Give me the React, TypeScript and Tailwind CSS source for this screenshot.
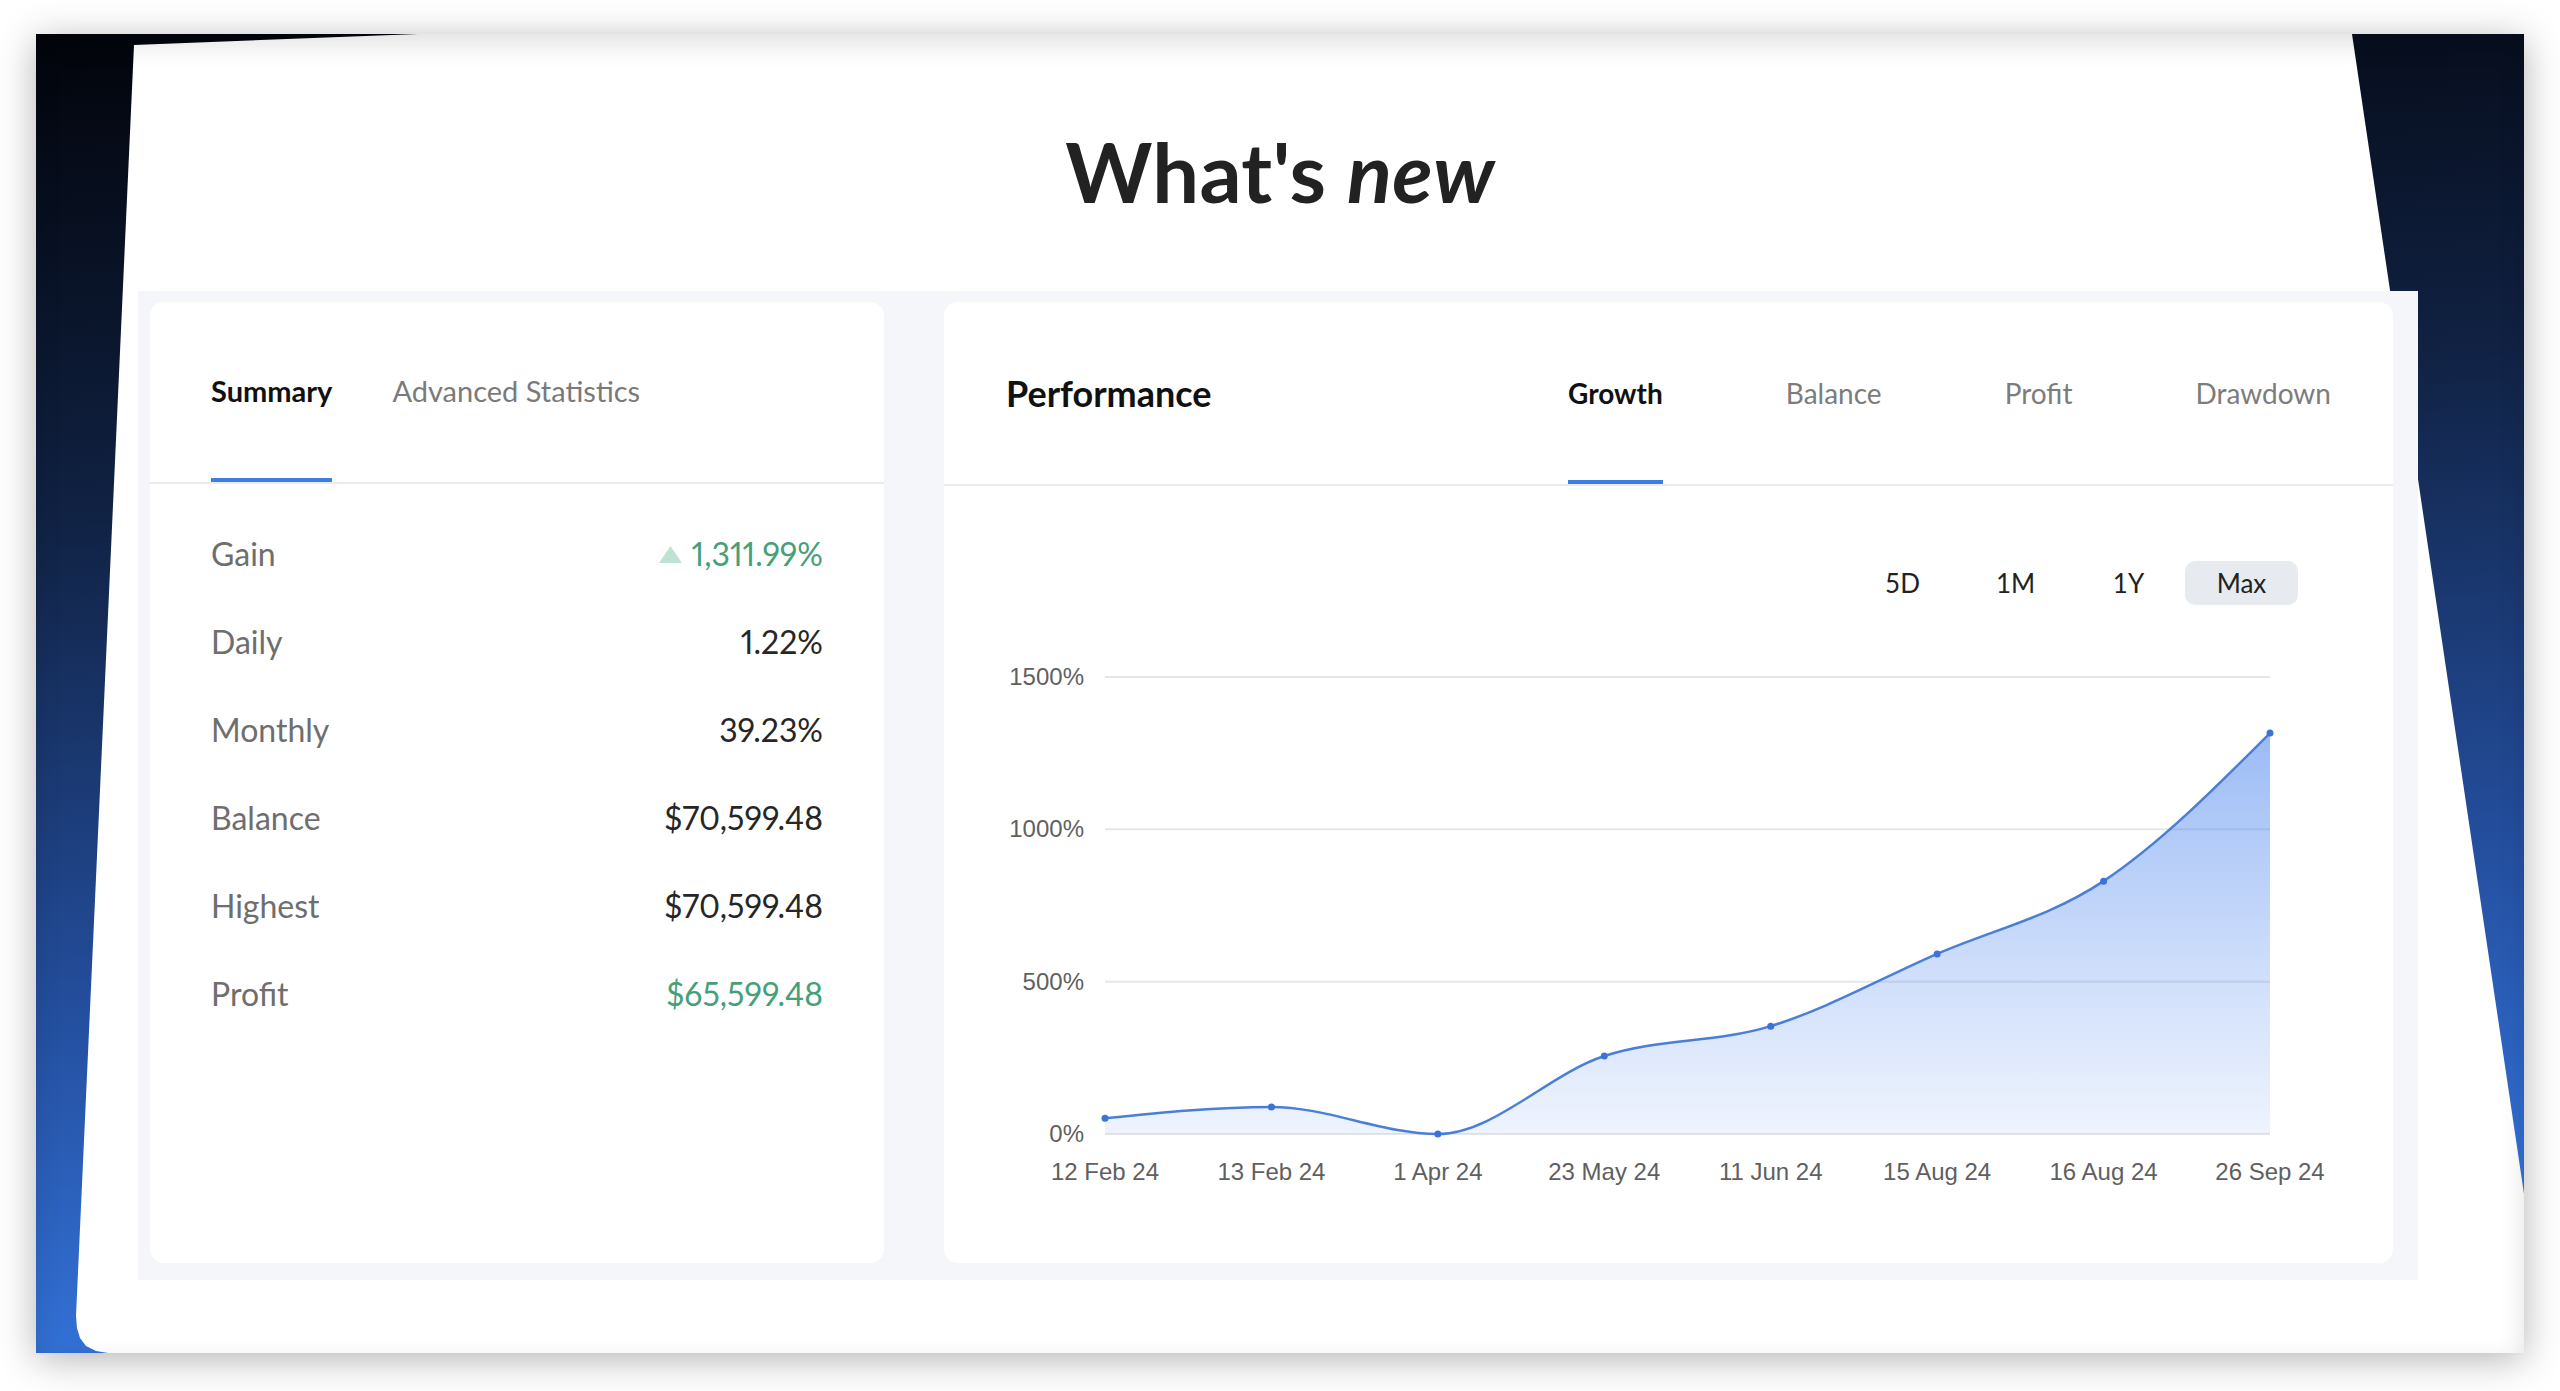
import React from "react";

const dates = ["12 Feb 24", "13 Feb 24", "1 Apr 24", "23 May 24", "11 Jun 24", "15 Aug 24", "16 Aug 24", "26 Sep 24"];
const growth = [52, 89, 0, 256, 354, 591, 830, 1316];

const X0 = 161;
const STEP = 166.43;
const BASE = 529;
const SCALE = 457 / 1500;

const px = (i: number) => X0 + i * STEP;
const py = (v: number) => BASE - v * SCALE;

// monotone cubic (same idea as d3.curveMonotoneX)
function monotonePath(pts: [number, number][]) {
  const n = pts.length;
  const sign = (x: number) => (x < 0 ? -1 : 1);
  const t: number[] = new Array(n).fill(0);
  for (let i = 1; i < n - 1; i++) {
    const h0 = pts[i][0] - pts[i - 1][0];
    const h1 = pts[i + 1][0] - pts[i][0];
    const s0 = (pts[i][1] - pts[i - 1][1]) / h0;
    const s1 = (pts[i + 1][1] - pts[i][1]) / h1;
    const p = (s0 * h1 + s1 * h0) / (h0 + h1);
    t[i] = (sign(s0) + sign(s1)) * Math.min(Math.abs(s0), Math.abs(s1), 0.5 * Math.abs(p)) || 0;
  }
  const h = pts[1][0] - pts[0][0];
  t[0] = (3 * (pts[1][1] - pts[0][1]) / h - t[1]) / 2;
  const hl = pts[n - 1][0] - pts[n - 2][0];
  t[n - 1] = (3 * (pts[n - 1][1] - pts[n - 2][1]) / hl - t[n - 2]) / 2;

  let d = `M ${pts[0][0]} ${pts[0][1]}`;
  for (let i = 0; i < n - 1; i++) {
    const [x0, y0] = pts[i];
    const [x1, y1] = pts[i + 1];
    const dx = (x1 - x0) / 3;
    d += ` C ${x0 + dx} ${y0 + dx * t[i]}, ${x1 - dx} ${y1 - dx * t[i + 1]}, ${x1} ${y1}`;
  }
  return d;
}

function GrowthChart() {
  const pts = growth.map((v, i) => [px(i), py(v)] as [number, number]);
  const line = monotonePath(pts);
  const area = `${line} L ${px(7)} ${BASE} L ${px(0)} ${BASE} Z`;

  return (
    <svg width="1449" height="600" viewBox="0 0 1449 600" className="block">
      <defs>
        <linearGradient id="growthFill" x1="0" y1="129" x2="0" y2="529" gradientUnits="userSpaceOnUse">
          <stop offset="0%" stopColor="#4a84ee" stopOpacity="0.55" />
          <stop offset="100%" stopColor="#5a8ff0" stopOpacity="0.1" />
        </linearGradient>
      </defs>

      {[0, 500, 1000, 1500].map((v) => (
        <g key={v}>
          <line x1={px(0)} x2={px(7)} y1={py(v)} y2={py(v)} stroke="#e4e6ea" strokeWidth="2" />
          <text
            x="140"
            y={py(v) + 8}
            textAnchor="end"
            fontFamily="'Liberation Sans', Arial, sans-serif"
            fontSize="24"
            fill="#5f5f5f"
          >
            {v}%
          </text>
        </g>
      ))}

      <path d={area} fill="url(#growthFill)" />
      <path d={line} fill="none" stroke="#4a7fd6" strokeWidth="2.5" />
      {pts.map(([x, y], i) => (
        <circle key={i} cx={x} cy={y} r="3.5" fill="#3b73d9" />
      ))}

      {dates.map((d, i) => (
        <text
          key={d}
          x={px(i)}
          y="575"
          textAnchor="middle"
          fontFamily="'Liberation Sans', Arial, sans-serif"
          fontSize="24"
          fill="#5f5f5f"
        >
          {d}
        </text>
      ))}
    </svg>
  );
}

const rows = [
  { label: "Gain", value: "1,311.99%", tone: "gain" },
  { label: "Daily", value: "1.22%", tone: "plain" },
  { label: "Monthly", value: "39.23%", tone: "plain" },
  { label: "Balance", value: "$70,599.48", tone: "plain" },
  { label: "Highest", value: "$70,599.48", tone: "plain" },
  { label: "Profit", value: "$65,599.48", tone: "green" },
];

function SummaryCard() {
  return (
    <div className="w-[734px] h-[961px] bg-white rounded-[14px] flex flex-col">
      <div className="h-[182px] px-[61px] flex gap-[60px] border-b-2 border-[#e9ebef]">
        <div className="flex flex-col">
          <span className="pt-[72px] leading-[34px] text-[29px] font-bold text-[#111]">Summary</span>
          <div className="mt-auto h-[4px] bg-[#3f7de0]" />
        </div>
        <span className="pt-[72px] leading-[34px] text-[29px] text-[#7a7a7a]">Advanced Statistics</span>
      </div>

      <div className="pt-[26px] pl-[61px] pr-[61px] flex flex-col [font-variant-numeric:proportional-nums]">
        {rows.map((r) => (
          <div key={r.label} className="h-[88px] flex items-center justify-between text-[32px]">
            <span className="text-[#6e6e6e]">{r.label}</span>
            {r.tone === "gain" ? (
              <span className="flex items-center gap-[10px] text-[#45a07a]">
                <svg width="23" height="17" viewBox="0 0 23 17">
                  <polygon points="11.5,0 23,17 0,17" fill="#bfe3d3" />
                </svg>
                {r.value}
              </span>
            ) : (
              <span className={r.tone === "green" ? "text-[#45a07a]" : "text-[#262626]"}>{r.value}</span>
            )}
          </div>
        ))}
      </div>
    </div>
  );
}

function PerformanceCard() {
  const tabs = ["Growth", "Balance", "Profit", "Drawdown"];
  const periods = ["5D", "1M", "1Y", "Max"];
  return (
    <div className="w-[1449px] h-[961px] bg-white rounded-[14px] flex flex-col">
      <div className="h-[184px] px-[62px] flex border-b-2 border-[#e9ebef]">
        <span className="pt-[69px] leading-[44px] text-[36px] font-bold text-[#111]">Performance</span>
        <div className="ml-auto flex gap-[123px]">
          {tabs.map((t, i) => (
            <div key={t} className="flex flex-col">
              <span
                className={
                  i === 0
                    ? "pt-[73px] leading-[36px] text-[28px] font-bold text-[#111]"
                    : "pt-[73px] leading-[36px] text-[28px] text-[#7c7c7c]"
                }
              >
                {t}
              </span>
              {i === 0 && <div className="mt-auto h-[4px] bg-[#3f7de0]" />}
            </div>
          ))}
        </div>
      </div>

      <div className="pt-[75px] pr-[95px] flex justify-end">
        {periods.map((p) => (
          <button
            key={p}
            className={
              p === "Max"
                ? "w-[113px] h-[44px] rounded-[10px] bg-[#e7eaef] text-[26px] text-[#222]"
                : "w-[113px] h-[44px] rounded-[10px] text-[26px] text-[#222]"
            }
          >
            {p}
          </button>
        ))}
      </div>

      <GrowthChart />
    </div>
  );
}

export default function App() {
  return (
    <div className="w-[2560px] h-[1391px] bg-white overflow-hidden pl-[36px] pt-[34px] font-['Lato','Noto_Sans',sans-serif]">
      <div className="relative w-[2488px] h-[1319px] overflow-hidden shadow-[0_6px_36px_rgba(0,0,0,0.3)] bg-[linear-gradient(176deg,#02040a_0%,#102142_32%,#244f9f_66%,#3a82f2_100%)]">
        {/* white paper sheet */}
        <div className="absolute inset-0 bg-white [clip-path:polygon(98px_11px,382px_0px,2316px_0px,2488px_1160px,2488px_1319px,72px_1319px,60px_1317px,50px_1312px,44px_1304px,41px_1294px,40px_1282px)]" />
        <div className="absolute inset-0 pointer-events-none shadow-[inset_0_10px_26px_rgba(0,0,0,0.12)]" />

        <div className="relative flex flex-col">
          <h1 className="pt-[96px] text-center text-[83px] leading-none font-bold tracking-[0.005em] text-[#222]">
            What's <em className="italic">new</em>
          </h1>

          <div className="mt-[78px] ml-[102px] w-[2280px] h-[989px] bg-[#f4f6f9] pt-[11px] pl-[12px] flex gap-[60px]">
            <SummaryCard />
            <PerformanceCard />
          </div>
        </div>
      </div>
    </div>
  );
}
